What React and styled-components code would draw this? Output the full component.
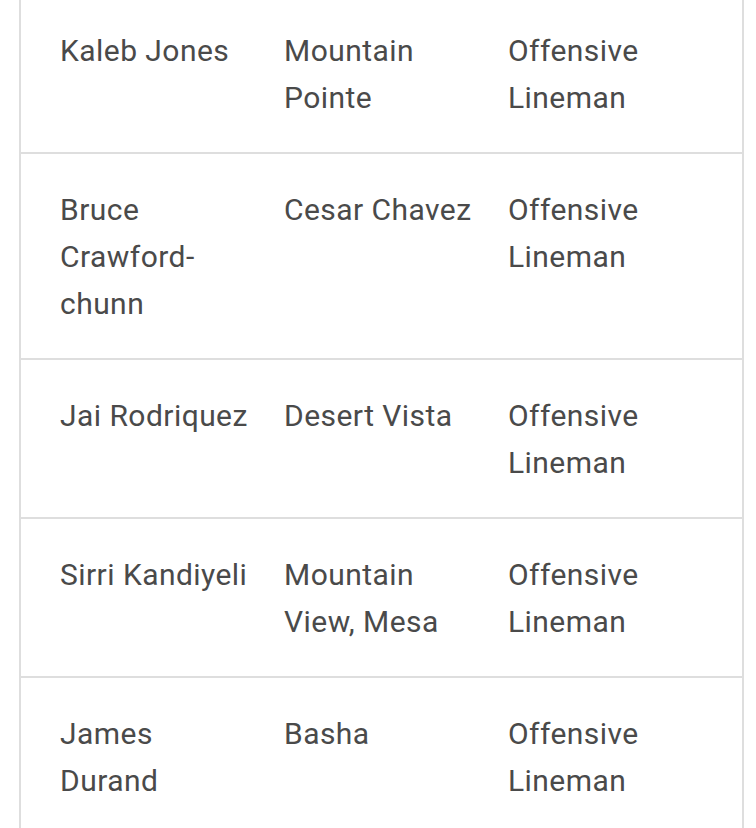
import styled, { createGlobalStyle } from "styled-components";

const players = [
  { name: "Kaleb Jones", school: "Mountain Pointe", position: "Offensive Lineman" },
  { name: "Bruce Crawford-chunn", school: "Cesar Chavez", position: "Offensive Lineman" },
  { name: "Jai Rodriquez", school: "Desert Vista", position: "Offensive Lineman" },
  { name: "Sirri Kandiyeli", school: "Mountain View, Mesa", position: "Offensive Lineman" },
  { name: "James Durand", school: "Basha", position: "Offensive Lineman" },
];

function App() {
  return (
    <>
      <GlobalStyle />
      <Page>
        <Table>
          {players.map((p) => (
            <Row key={p.name}>
              <Cell>{p.name}</Cell>
              <Cell>{p.school}</Cell>
              <Cell>{p.position}</Cell>
            </Row>
          ))}
        </Table>
      </Page>
    </>
  );
}

const GlobalStyle = createGlobalStyle`
  body {
    margin: 0;
    background: #ffffff;
    font-family: Roboto, "Liberation Sans", sans-serif;
  }
`;

const Page = styled.div`
  padding-left: 19px;
  height: 828px;
  overflow: hidden;
`;

const Table = styled.div`
  width: 725px;
  margin-top: -5px;
  border-left: 2px solid #dedede;
  border-right: 2px solid #dedede;
  box-sizing: border-box;
`;

const Row = styled.div`
  display: grid;
  grid-template-columns: 224px 224px 1fr;
  padding: 32px 0 31px 39px;
  border-bottom: 2px solid #dedede;
`;

const Cell = styled.div`
  padding-right: 30px;
  font-size: 30px;
  line-height: 47px;
  color: #4a4a4a;
  letter-spacing: 0.45px;
`;

export default App;
